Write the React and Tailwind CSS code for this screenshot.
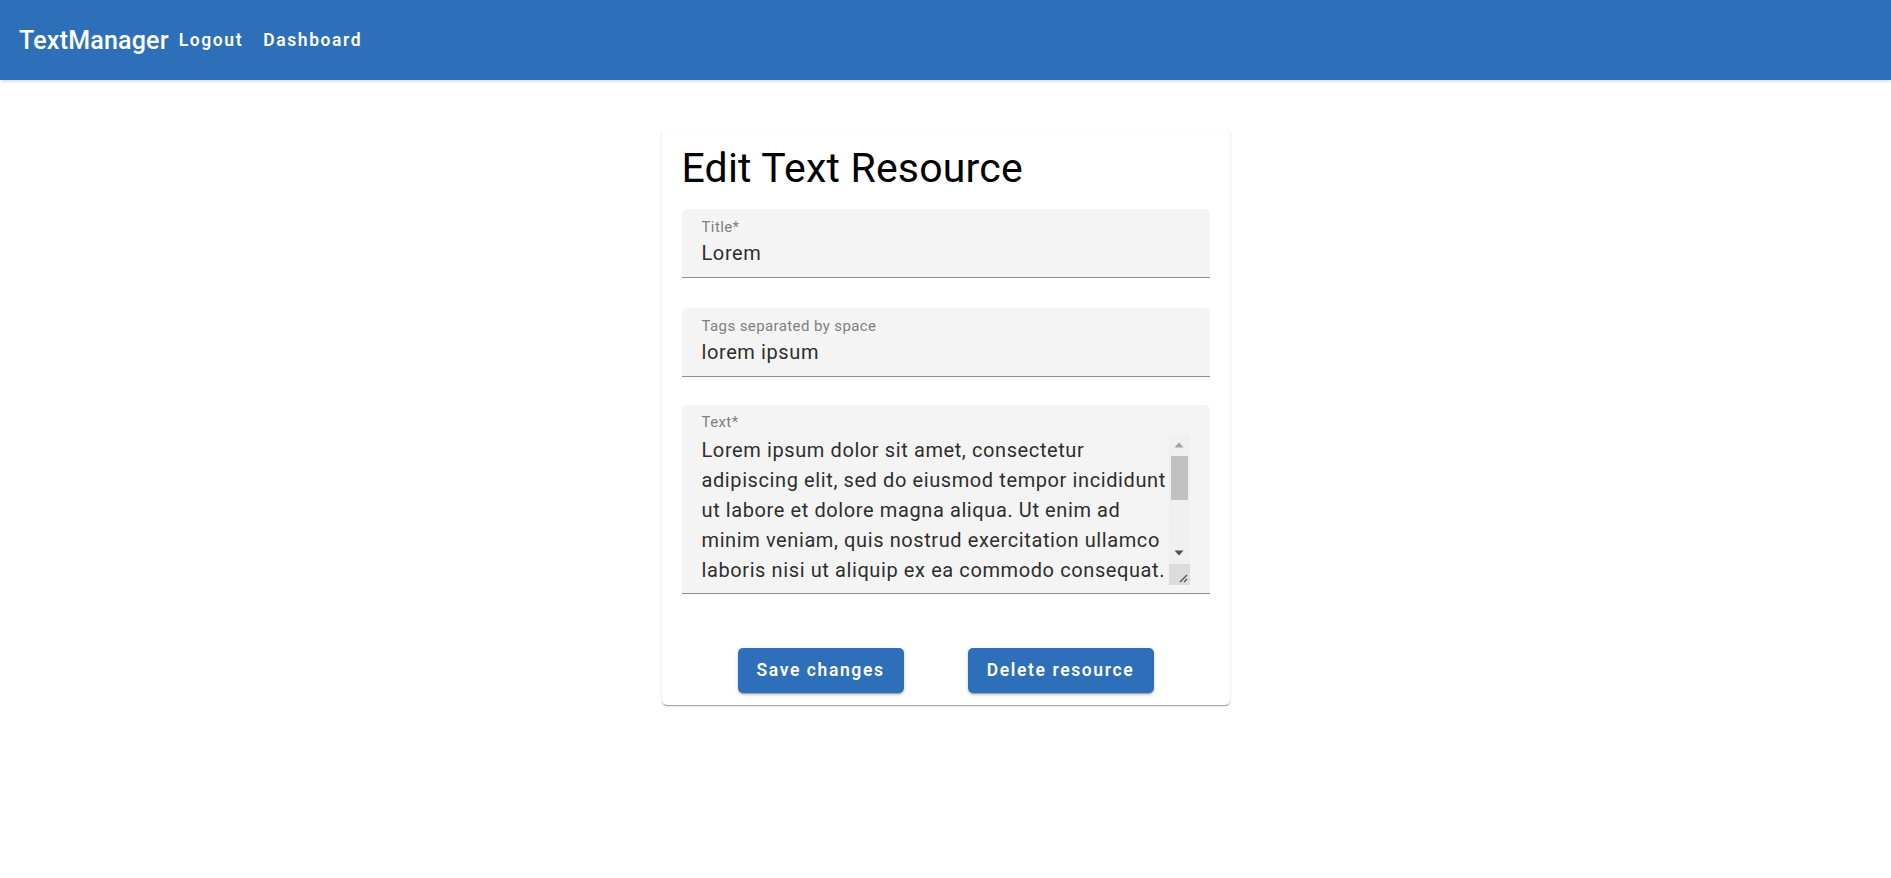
export default function App() {
  const lines = [
    "Lorem ipsum dolor sit amet, consectetur",
    "adipiscing elit, sed do eiusmod tempor incididunt",
    "ut labore et dolore magna aliqua. Ut enim ad",
    "minim veniam, quis nostrud exercitation ullamco",
    "laboris nisi ut aliquip ex ea commodo consequat.",
  ];

  return (
    <div className="min-h-screen bg-white font-['Roboto',sans-serif] text-[#2e2e2e]">
      <header className="h-[80px] bg-[#2e6fb9] flex items-center pl-[19px] shadow-[0_2px_4px_-1px_rgba(0,0,0,0.2)]">
        <span className="text-[25px] font-medium text-white tracking-[0.2px] leading-none">TextManager</span>
        <button className="px-[10px] pt-[1px] text-[17.5px] font-semibold text-white tracking-[1.6px] leading-none">Logout</button>
        <button className="px-[10px] pt-[1px] text-[17.5px] font-semibold text-white tracking-[1.6px] leading-none">Dashboard</button>
      </header>

      <div className="flex justify-center pt-[49px]">
        <div className="w-[568px] bg-white rounded-[5px] px-[20px] pt-[13px] pb-[12px] shadow-[0_2px_1px_-1px_rgba(0,0,0,0.2),0_1px_1px_0_rgba(0,0,0,0.14),0_1px_3px_0_rgba(0,0,0,0.12)]">
          <h1 className="text-[41px] leading-[52.5px] font-normal text-black tracking-[0.2px]">Edit Text Resource</h1>

          <div className="mt-[14px] bg-[#f4f4f4] rounded-t-[5px] border-b border-[#8f8f8f] px-[20px] pt-[9px] pb-[9px]">
            <div className="text-[15px] leading-[18px] tracking-[0.4px] text-[#808080]">Title*</div>
            <div className="mt-[2px] text-[20px] leading-[30px] tracking-[0.6px]">Lorem</div>
          </div>

          <div className="mt-[30px] bg-[#f4f4f4] rounded-t-[5px] border-b border-[#8f8f8f] px-[20px] pt-[9px] pb-[9px]">
            <div className="text-[15px] leading-[18px] tracking-[0.4px] text-[#808080]">Tags separated by space</div>
            <div className="mt-[2px] text-[20px] leading-[30px] tracking-[0.6px]">lorem ipsum</div>
          </div>

          <div className="mt-[28px] bg-[#f4f4f4] rounded-t-[5px] border-b border-[#8f8f8f] pl-[20px] pr-[20px] pt-[8px] pb-[8px]">
            <div className="text-[15px] leading-[18px] tracking-[0.4px] text-[#808080]">Text*</div>
            <div className="mt-[4px] flex">
              <div className="flex-1 overflow-hidden text-[20px] leading-[30px] tracking-[0.6px] whitespace-nowrap">
                {lines.map((l) => (
                  <div key={l}>{l}</div>
                ))}
              </div>
              <div className="w-[21px] h-[150px] flex flex-col bg-[#f0f0f0]">
                <div className="h-[21px] flex items-center justify-center">
                  <svg width="10" height="6" viewBox="0 0 10 6"><path d="M5 0.5 L9.5 5.5 L0.5 5.5 Z" fill="#a3a3a3" /></svg>
                </div>
                <div className="mx-[2px] h-[44px] bg-[#c1c1c1]" />
                <div className="flex-1" />
                <div className="h-[21px] flex items-center justify-center">
                  <svg width="10" height="6" viewBox="0 0 10 6"><path d="M0.5 0.5 L9.5 0.5 L5 5.5 Z" fill="#505050" /></svg>
                </div>
                <div className="h-[21px] bg-[#dcdcdc] flex items-end justify-end p-[2px]">
                  <svg width="11" height="11" viewBox="0 0 11 11">
                    <path d="M10 3 L3 10 M10 7 L7 10" stroke="#505050" strokeWidth="1.3" />
                  </svg>
                </div>
              </div>
            </div>
          </div>

          <div className="mt-[54px] flex justify-center gap-[64px]">
            <button className="w-[166px] h-[45px] rounded-[5px] bg-[#2e6fb9] text-white text-[17.5px] font-semibold tracking-[1.6px] shadow-[0_3px_1px_-2px_rgba(0,0,0,0.2),0_2px_2px_0_rgba(0,0,0,0.14),0_1px_5px_0_rgba(0,0,0,0.12)]">
              Save changes
            </button>
            <button className="w-[186px] h-[45px] rounded-[5px] bg-[#2e6fb9] text-white text-[17.5px] font-semibold tracking-[1.6px] shadow-[0_3px_1px_-2px_rgba(0,0,0,0.2),0_2px_2px_0_rgba(0,0,0,0.14),0_1px_5px_0_rgba(0,0,0,0.12)]">
              Delete resource
            </button>
          </div>
        </div>
      </div>
    </div>
  );
}
